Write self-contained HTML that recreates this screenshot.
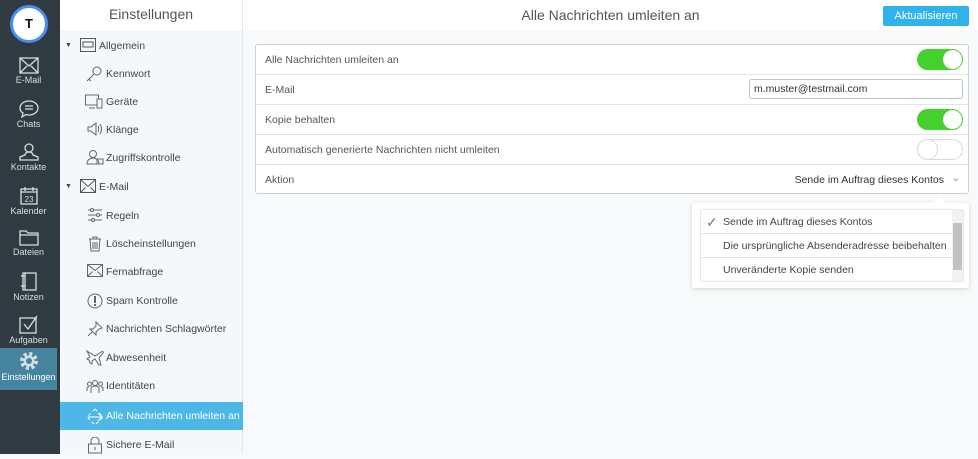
<!DOCTYPE html>
<html><head><meta charset="utf-8"><style>
*{box-sizing:border-box;margin:0;padding:0}
body{width:978px;height:454px;overflow:hidden;font-family:"Liberation Sans",sans-serif;background:#f7f9fa;position:relative;color:#444}
#side{position:absolute;left:0;top:0;width:60px;height:454px;background:#2f3b41}
.av{position:absolute;left:10px;top:5px;width:38px;height:38px;border-radius:50%;background:#fff;border:3px solid #4a8cf0;text-align:center;line-height:32px;font-weight:bold;font-size:13px;color:#111}
.si{position:absolute;left:0;width:57px;height:42px;text-align:center;color:#d8dde0;font-size:9px}
.si svg{display:block;margin:3px auto 1px}
.si.act{background:#44849f;color:#fff}
#nav{position:absolute;left:60px;top:0;width:183px;height:454px;background:#f5f8fa;border-right:1px solid #e4e8eb}
#nav .hd{height:30px;background:#fff;text-align:center;font-size:14px;line-height:28px;color:#555}
.ni{position:absolute;left:0;width:183px;height:28px;font-size:10.5px;line-height:28px;color:#444;white-space:nowrap}
.ni svg{position:absolute;top:6px}
.ni.act{background:#4db8e8;color:#fff}
#main{position:absolute;left:243px;top:0;right:0;height:454px}
#main .hd{height:30px;background:#fff;text-align:center;font-size:14px;line-height:30px;color:#555}
.btn{position:absolute;right:9px;top:6px;width:86px;height:20px;background:#2fb3ea;color:#fff;font-size:11px;line-height:20px;text-align:center;border-radius:2px}
.box{position:absolute;left:12px;top:44px;width:714px;height:150px;background:#fff;border:1px solid #c9cfd3;border-radius:3px}
.row{height:30px;border-bottom:1px solid #e3e6e8;font-size:10.5px;line-height:30px;padding-left:9px;color:#555;position:relative}
.row:last-child{border-bottom:none}
.tg{position:absolute;right:5px;top:4px;width:46px;height:21px;border-radius:11px;background:#44d12e}
.tg:after{content:"";position:absolute;right:1px;top:1px;width:19px;height:19px;border-radius:50%;background:#fff}
.tg.off{background:#fff;border:1px solid #d5d9dc}
.tg.off:after{left:0;top:0;box-shadow:0 0 0 1px #d5d9dc}
.inp{position:absolute;right:5px;top:4px;width:214px;height:20px;border:1px solid #b8c4cc;border-radius:3px;font-size:10.5px;line-height:18px;padding-left:4px;color:#333}
.dd{position:absolute;left:692px;top:203px;width:277px;height:85px;background:#fff;box-shadow:0 1px 4px rgba(0,0,0,.15);border-radius:3px}
.dd:before{content:"";position:absolute;left:240px;top:-7px;border:7px solid transparent;border-top:0;border-bottom-color:#fff}
.opt{height:24px;border-bottom:1px solid #e3e6e8;font-size:10.5px;line-height:24px;padding-left:22px;color:#444;position:relative;white-space:nowrap}
</style></head><body>
<div id="side">
<div class="av">T</div>
<div class="si" style="top:54px"><svg width="20" height="17" viewBox="0 0 20 17" fill="none" stroke="#d8dde0" stroke-width="1.3"><rect x="1" y="1" width="18" height="15"/><path d="M1 1l9 8 9-8M1 16l7-7M19 16l-7-7"/></svg>E-Mail</div>
<div class="si" style="top:97px"><svg width="20" height="18" viewBox="0 0 20 18" fill="none" stroke="#d8dde0" stroke-width="1.3"><path d="M10 1c5 0 9 3 9 7s-4 7-9 7c-1 0-2 0-3-.5L3 17l1-4C2 12 1 10 1 8c0-4 4-7 9-7z"/><path d="M6 6h8M6 9h8"/></svg>Chats</div>
<div class="si" style="top:140px"><svg width="20" height="18" viewBox="0 0 20 18" fill="none" stroke="#d8dde0" stroke-width="1.3"><circle cx="10" cy="5" r="4"/><path d="M10 9c-3 0-4 2-4 3l-5 2v3h18v-3l-5-2c0-1-1-3-4-3z"/></svg>Kontakte</div>
<div class="si" style="top:183px"><svg width="20" height="19" viewBox="0 0 20 19" fill="none" stroke="#d8dde0" stroke-width="1.3"><rect x="2" y="3" width="16" height="15"/><path d="M2 6h16M6 1v4M14 1v4"/><text x="10" y="16" font-size="8" fill="#d8dde0" stroke="none" text-anchor="middle" font-family="Liberation Sans">23</text></svg>Kalender</div>
<div class="si" style="top:226px"><svg width="20" height="17" viewBox="0 0 20 17" fill="none" stroke="#d8dde0" stroke-width="1.3"><path d="M1 2h6l2 2h10v12H1z"/><path d="M1 6h18"/></svg>Dateien</div>
<div class="si" style="top:269px"><svg width="20" height="19" viewBox="0 0 20 19" fill="none" stroke="#d8dde0" stroke-width="1.3"><rect x="4" y="1" width="13" height="17"/><path d="M2 4h4M2 14h4M6 1v17"/></svg>Notizen</div>
<div class="si" style="top:312px"><svg width="20" height="19" viewBox="0 0 20 19" fill="none" stroke="#d8dde0" stroke-width="1.3"><rect x="1" y="3" width="16" height="15"/><path d="M5 9l4 5 9-13"/></svg>Aufgaben</div>
<div class="si act" style="top:348px;height:42px"><svg width="20" height="20" viewBox="0 0 20 20"><circle cx="10" cy="10" r="7" fill="none" stroke="#d8dde0" stroke-width="4" stroke-dasharray="3 2.5"/><circle cx="10" cy="10" r="5.5" fill="#d8dde0"/><circle cx="10" cy="10" r="3" fill="#44849f"/></svg>Einstellungen</div>
</div>
<div id="nav">
<div class="hd">Einstellungen</div>
<div class="ni" style="top:32px"><span style="position:absolute;left:5px;font-size:7px">▼</span><svg style="left:20px" width="16" height="14" viewBox="0 0 16 14" fill="none" stroke="#555"><rect x=".5" y=".5" width="15" height="13"/><rect x="3" y="4" width="10" height="5"/></svg><span style="position:absolute;left:39px">Allgemein</span></div>
<div class="ni" style="top:60px"><svg style="left:26px" width="16" height="16" viewBox="0 0 16 16" fill="none" stroke="#666"><circle cx="11" cy="5" r="4"/><path d="M8 8L1 15M3 13l2 2"/></svg><span style="position:absolute;left:46px">Kennwort</span></div>
<div class="ni" style="top:88px"><svg style="left:25px" width="18" height="15" viewBox="0 0 18 15" fill="none" stroke="#666"><rect x=".5" y="1" width="13" height="10"/><path d="M4 14h6"/><rect x="12" y="5" width="5" height="9" fill="#f5f8fa"/></svg><span style="position:absolute;left:46px">Geräte</span></div>
<div class="ni" style="top:116px"><svg style="left:27px" width="16" height="14" viewBox="0 0 16 14" fill="none" stroke="#666"><path d="M1 5h3l5-4v12L4 9H1z M11 4c1 2 1 4 0 6M13 2c2 3 2 7 0 10"/></svg><span style="position:absolute;left:46px">Klänge</span></div>
<div class="ni" style="top:144px"><svg style="left:26px" width="18" height="15" viewBox="0 0 18 15" fill="none" stroke="#666"><circle cx="7" cy="4" r="3.5"/><path d="M1 14c0-4 3-6 6-6s6 2 6 6z"/><rect x="11" y="9" width="6" height="5"/></svg><span style="position:absolute;left:46px">Zugriffskontrolle</span></div>
<div class="ni" style="top:173px"><span style="position:absolute;left:5px;font-size:7px">▼</span><svg style="left:20px" width="16" height="14" viewBox="0 0 16 14" fill="none" stroke="#555"><rect x=".5" y=".5" width="15" height="13"/><path d="M.5.5l7.5 7 7.5-7M.5 13.5l5-5M15.5 13.5l-5-5"/></svg><span style="position:absolute;left:39px">E-Mail</span></div>
<div class="ni" style="top:202px"><svg style="left:27px" width="16" height="14" viewBox="0 0 16 14" fill="none" stroke="#666"><path d="M1 2h14M1 7h14M1 12h14"/><circle cx="5" cy="2" r="1.5" fill="#f5f8fa"/><circle cx="11" cy="7" r="1.5" fill="#f5f8fa"/><circle cx="6" cy="12" r="1.5" fill="#f5f8fa"/></svg><span style="position:absolute;left:46px">Regeln</span></div>
<div class="ni" style="top:230px"><svg style="left:28px" width="14" height="16" viewBox="0 0 14 16" fill="none" stroke="#666"><path d="M1 3h12M5 3V1h4v2M2 3l1 12h8l1-12M5 6v7M7 6v7M9 6v7"/></svg><span style="position:absolute;left:46px">Löscheinstellungen</span></div>
<div class="ni" style="top:258px"><svg style="left:27px" width="16" height="13" viewBox="0 0 16 13" fill="none" stroke="#666"><rect x=".5" y=".5" width="15" height="12"/><path d="M.5.5l7.5 6 7.5-6M.5 12.5l5-5M15.5 12.5l-5-5"/></svg><span style="position:absolute;left:46px">Fernabfrage</span></div>
<div class="ni" style="top:287px"><svg style="left:27px" width="16" height="16" viewBox="0 0 16 16" fill="none" stroke="#666"><circle cx="8" cy="8" r="7"/><path d="M8 3v7M8 11v2" stroke-width="2"/></svg><span style="position:absolute;left:46px">Spam Kontrolle</span></div>
<div class="ni" style="top:315px"><svg style="left:27px" width="16" height="16" viewBox="0 0 16 16" fill="none" stroke="#666"><path d="M9 1l6 6-3 1-3 3 0 3-6-6 3 0 3-3zM5 11l-4 4"/></svg><span style="position:absolute;left:46px">Nachrichten Schlagwörter</span></div>
<div class="ni" style="top:344px"><svg style="left:26px" width="18" height="16" viewBox="0 0 18 16" fill="none" stroke="#666"><path d="M1 1l8 5 6-4c2-1 3 0 2 1l-4 5 2 7-2 0-4-6-3 2 0 3-2-1-1-3-2-1 3-2z"/></svg><span style="position:absolute;left:46px">Abwesenheit</span></div>
<div class="ni" style="top:372px"><svg style="left:26px" width="18" height="16" viewBox="0 0 18 16" fill="none" stroke="#666"><circle cx="9" cy="5" r="2.5"/><circle cx="3.5" cy="6" r="2"/><circle cx="14.5" cy="6" r="2"/><path d="M5 15v-5c0-1 2-2 4-2s4 1 4 2v5M1 13v-3c0-1 1-1 2-1M17 13v-3c0-1-1-1-2-1"/></svg><span style="position:absolute;left:46px">Identitäten</span></div>
<div class="ni act" style="top:402px"><svg style="left:26px" width="18" height="18" viewBox="0 0 18 18" fill="none" stroke="#fff"><path d="M9 1l8 8-8 8-8-8z" stroke-dasharray="3 3"/><path d="M2 9h14M12 5l4 4-4 4"/></svg><span style="position:absolute;left:46px">Alle Nachrichten umleiten an</span></div>
<div class="ni" style="top:431px"><svg style="left:28px" width="14" height="17" viewBox="0 0 14 17" fill="none" stroke="#666"><rect x=".5" y="7" width="13" height="9"/><path d="M3 7V4a4 4 0 0 1 8 0v3M7 10v3"/></svg><span style="position:absolute;left:46px">Sichere E-Mail</span></div>
</div>
<div id="main">
<div class="hd">Alle Nachrichten umleiten an</div>
<div class="btn">Aktualisieren</div>
<div class="box">
<div class="row">Alle Nachrichten umleiten an<div class="tg"></div></div>
<div class="row">E-Mail<div class="inp">m.muster@testmail.com</div></div>
<div class="row">Kopie behalten<div class="tg"></div></div>
<div class="row">Automatisch generierte Nachrichten nicht umleiten<div class="tg off"></div></div>
<div class="row">Aktion<span style="position:absolute;right:24px;color:#333">Sende im Auftrag dieses Kontos</span><span style="position:absolute;right:8px;top:-1px;color:#888;font-size:10px">&#8964;</span></div>
</div>
</div>
<div class="dd">
<div style="position:absolute;left:8px;top:6px;width:264px;height:73px;border:1px solid #e6e8ea;border-radius:2px;overflow:hidden">
<div class="opt"><span style="position:absolute;left:5px;top:0;font-size:14px;color:#777">✓</span>Sende im Auftrag dieses Kontos</div>
<div class="opt">Die ursprüngliche Absenderadresse beibehalten</div>
<div class="opt" style="border-bottom:none">Unveränderte Kopie senden</div>
<div style="position:absolute;right:0;top:0;width:11px;height:73px;background:#f2f2f2"></div>
<div style="position:absolute;right:1px;top:13px;width:9px;height:47px;background:#c1c1c1"></div>
</div>
</div>
</body></html>
